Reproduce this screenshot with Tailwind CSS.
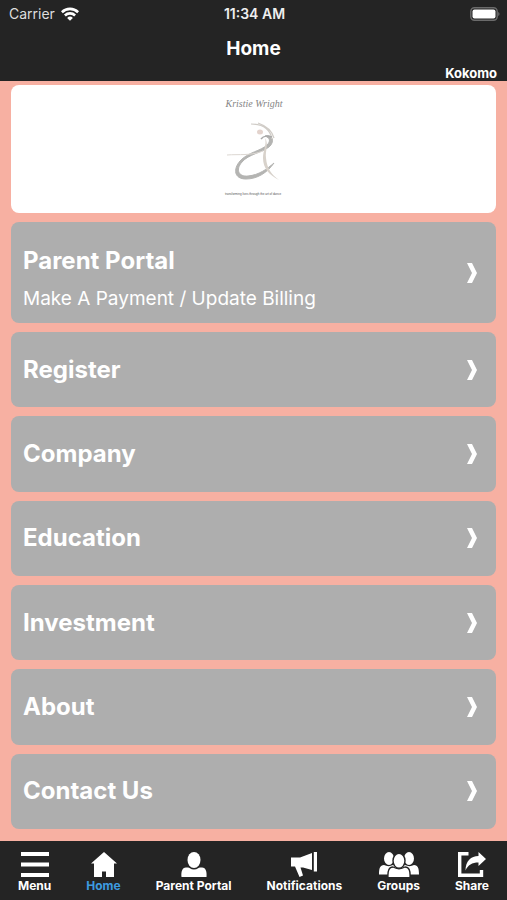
<!DOCTYPE html>
<html lang="en">
<head>
  <meta charset="UTF-8">
  <title>Home</title>
  <meta name="viewport" content="width=device-width, initial-scale=1">
  <script src="https://cdn.jsdelivr.net/npm/@tailwindcss/browser@4"></script>
</head>
<body class="bg-[#f7b0a2] font-['Inter',sans-serif] text-white">
  <div class="flex flex-col min-h-screen">

    <header class="bg-[#242424] h-[81px] flex flex-col">
      <div class="grid grid-cols-3 items-center h-7 pl-[9px] pr-[7px] text-sm">
        <div class="flex items-center gap-1.5 text-[#dedede]">
          <span>Carrier</span>
          <svg class="w-[18px] h-[14px]" viewBox="0 0 18 14" fill="none" stroke="#fff" stroke-width="2.6">
            <path d="M0.9 5.2a11.6 11.6 0 0 1 16.2 0"/>
            <path d="M3.9 8.5a7.3 7.3 0 0 1 10.2 0"/>
            <path d="M9 13.8 6.1 10.9a4.1 4.1 0 0 1 5.8 0z" fill="#fff" stroke="none"/>
          </svg>
        </div>
        <div class="text-center font-semibold whitespace-nowrap text-[#eee]">11:34 AM</div>
        <svg class="w-[30px] h-[14px] justify-self-end" viewBox="0 0 30 14">
          <rect x="0.8" y="0.8" width="26.4" height="12.4" rx="3.6" fill="none" stroke="#6b6b6b" stroke-width="1.4"/>
          <rect x="2.5" y="2.4" width="23" height="9.2" rx="2" fill="#fff"/>
          <path d="M28.2 5v4c1.8-.6 1.8-3.4 0-4z" fill="#6b6b6b"/>
        </svg>
      </div>
      <h1 class="text-center text-[19px] leading-10 pt-px font-bold">Home</h1>
      <p class="text-right text-[13px] leading-[8px] font-bold pr-2.5">Kokomo</p>
    </header>

    <main class="flex-1 flex flex-col gap-[9px] px-[11px] pt-1 pb-3">
      <div class="bg-white rounded-lg h-32 flex justify-center">
        <svg class="w-[110px] h-32" viewBox="0 0 110 128" fill="none">
          <text x="55" y="22" text-anchor="middle" font-family="Liberation Serif, serif" font-style="italic" font-size="10" fill="#858585">Kristie Wright</text>
          <path d="M66 51C74 49 76 57 70 62C62 68 50 69 43 77C36 85 40 92 49 91C60 90 68 84 75 78C68 88 58 94 47 94C35 94 34 84 41 76C49 67 62 66 68 60C72 56 71 53 66 51z" fill="#b4b4b2" stroke="#b4b4b2" stroke-width="1"/>
          <path d="M28 70C40 69 52 71 64 66" stroke="#ddd8d3" stroke-width="1"/>
          <path d="M66 53C70 59 66 66 67 73C68 84 73 90 80 95C70 90 64 83 64 73C64 65 68 60 66 53z" fill="#d8d2cb"/>
          <path d="M52 39C63 39 71 44 73 54M59 38C68 41 73 46 75 53" stroke="#d0ccc7" stroke-width="1.2"/>
          <ellipse cx="61" cy="47" rx="3" ry="2.5" fill="#e3d3cd"/>
          <path d="M62 54C65 50 69 51 73 52" stroke="#aaa" stroke-width="1.5"/>
          <text x="54" y="110" text-anchor="middle" font-family="Liberation Sans, sans-serif" font-size="3" fill="#555">transforming lives through the art of dance</text>
        </svg>
      </div>

      <a href="#portal" class="bg-[#aeaeae] rounded-lg h-[101px] pl-3 pr-[19px] flex items-center justify-between">
        <span class="flex flex-col gap-2.5 pt-3.5">
          <span class="text-2xl leading-7 font-bold">Parent Portal</span>
          <span class="text-[19px] leading-7">Make A Payment / Update Billing</span>
        </span>
        <svg class="w-[10px] h-5" viewBox="0 0 10 20" fill="#fff"><path d="M0 0h5l5 10-5 10H0l5-10z"/></svg>
      </a>
      <a href="#register" class="bg-[#aeaeae] rounded-lg flex-1 min-h-[75px] pl-3 pr-[19px] flex items-center justify-between">
        <span class="text-2xl leading-7 font-bold">Register</span>
        <svg class="w-[10px] h-5" viewBox="0 0 10 20" fill="#fff"><path d="M0 0h5l5 10-5 10H0l5-10z"/></svg>
      </a>
      <a href="#company" class="bg-[#aeaeae] rounded-lg flex-1 min-h-[75px] pl-3 pr-[19px] flex items-center justify-between">
        <span class="text-2xl leading-7 font-bold">Company</span>
        <svg class="w-[10px] h-5" viewBox="0 0 10 20" fill="#fff"><path d="M0 0h5l5 10-5 10H0l5-10z"/></svg>
      </a>
      <a href="#education" class="bg-[#aeaeae] rounded-lg flex-1 min-h-[75px] pl-3 pr-[19px] flex items-center justify-between">
        <span class="text-2xl leading-7 font-bold">Education</span>
        <svg class="w-[10px] h-5" viewBox="0 0 10 20" fill="#fff"><path d="M0 0h5l5 10-5 10H0l5-10z"/></svg>
      </a>
      <a href="#investment" class="bg-[#aeaeae] rounded-lg flex-1 min-h-[75px] pl-3 pr-[19px] flex items-center justify-between">
        <span class="text-2xl leading-7 font-bold">Investment</span>
        <svg class="w-[10px] h-5" viewBox="0 0 10 20" fill="#fff"><path d="M0 0h5l5 10-5 10H0l5-10z"/></svg>
      </a>
      <a href="#about" class="bg-[#aeaeae] rounded-lg flex-1 min-h-[75px] pl-3 pr-[19px] flex items-center justify-between">
        <span class="text-2xl leading-7 font-bold">About</span>
        <svg class="w-[10px] h-5" viewBox="0 0 10 20" fill="#fff"><path d="M0 0h5l5 10-5 10H0l5-10z"/></svg>
      </a>
      <a href="#contact" class="bg-[#aeaeae] rounded-lg flex-1 min-h-[75px] pl-3 pr-[19px] flex items-center justify-between">
        <span class="text-2xl leading-7 font-bold">Contact Us</span>
        <svg class="w-[10px] h-5" viewBox="0 0 10 20" fill="#fff"><path d="M0 0h5l5 10-5 10H0l5-10z"/></svg>
      </a>
    </main>

    <nav class="bg-[#242424] h-[59px] px-[18px] pt-[11px] flex justify-between items-start text-xs font-bold">
      <button type="button" class="flex flex-col items-center">
        <svg class="w-7 h-[26px]" viewBox="0 0 28 26" fill="#fff"><path d="M0 0h28v4H0zM0 10.500h28v4H0zM0 21h28v4H0z"/></svg>
        <span>Menu</span>
      </button>
      <a href="#home" class="flex flex-col items-center text-[#3d9be0]">
        <svg class="w-[26px] h-[26px]" viewBox="0 0 26 26" fill="#fff"><path d="M13 0 26 11.5H23V25H15V19.500H11V25H3V11.5H0z"/></svg>
        <span>Home</span>
      </a>
      <a href="#portal" class="flex flex-col items-center">
        <svg class="w-[26px] h-[26px]" viewBox="0 0 26 26" fill="#fff">
          <ellipse cx="13" cy="8" rx="6.5" ry="8"/>
          <path d="M0.500 25c-.5-5 .5-9.500 4.500-9.500 1.500 0 3 0 3.500.5 3 2 6 2 9 0 .5-.5 2-.5 3.500-.5 4 0 5 4.500 4.500 9.500z"/>
        </svg>
        <span>Parent Portal</span>
      </a>
      <a href="#notifications" class="flex flex-col items-center">
        <svg class="w-[26px] h-[26px]" viewBox="0 0 26 26" fill="#fff">
          <path d="M21 1v17L12 15.500H9.500L12 23.500 8.500 25 4 14.500H0V5.500h9zM22.800 0H26v19.500h-3.200z"/>
        </svg>
        <span>Notifications</span>
      </a>
      <a href="#groups" class="flex flex-col items-center">
        <svg class="w-10 h-[26px]" viewBox="0 0 40 26" fill="#fff">
          <ellipse cx="10" cy="6.500" rx="5" ry="6.500"/>
          <ellipse cx="30" cy="6.500" rx="5" ry="6.500"/>
          <path d="M0 22.500c0-6 1-9.500 5-9.500 3 1.500 6 1.500 9 0 2 0 3 2 3 4l-6 5.500zM40 22.500c0-6-1-9.500-5-9.500-3 1.500-6 1.500-9 0-2 0-3 2-3 4l6 5.500z"/>
          <path d="M9 25.600c-.5-7 1-10.600 5-10.600 3.500 2 8.500 2 12 0 4 0 5.500 3.500 5 10.600z" stroke="#242424" stroke-width="1.4"/>
          <ellipse cx="20" cy="8.800" rx="6" ry="7.500" stroke="#242424" stroke-width="1.4"/>
        </svg>
        <span>Groups</span>
      </a>
      <a href="#share" class="flex flex-col items-center">
        <svg class="w-7 h-[26px]" viewBox="0 0 28 26">
          <path d="M10.500 1.700H1.700v21.600H23.500V18" fill="none" stroke="#fff" stroke-width="3.400"/>
          <path d="M20.500 0 28 7 20.500 14V10.500C14 10.500 10 13 7.500 18.500 7.500 9 13 4 20.500 4z" fill="#fff"/>
        </svg>
        <span>Share</span>
      </a>
    </nav>

  </div>
</body>
</html>
